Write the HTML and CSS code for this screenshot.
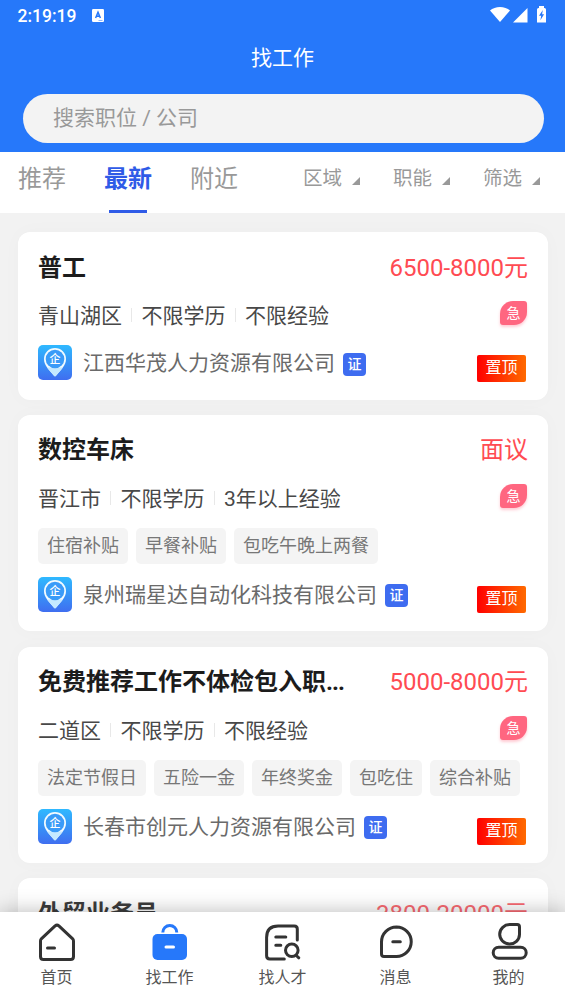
FILE: index.html
```html
<!DOCTYPE html>
<html lang="zh-CN">
<head>
<meta charset="utf-8">
<title>找工作</title>
<link rel="stylesheet" href="styles.css">
</head>
<body>
<svg class="defs" width="0" height="0">
  <defs>
    <linearGradient id="logo-bg" x1="0" y1="0" x2="0" y2="1"><stop offset="0" stop-color="#2fb9ff"/><stop offset="1" stop-color="#3f6ef0"/></linearGradient>
    <symbol id="logo" viewBox="0 0 34 35">
      <rect width="34" height="35" rx="5" fill="url(#logo-bg)"/>
      <path d="M17 3a11 11 0 0 0-11 11.200c0 6 5 10.500 10 16.500q1 1 2 0c5-6 10-10.500 10-16.500A11 11 0 0 0 17 3z" fill="#f2fbff"/>
      <path d="M9 22.500h16l-7 8.200q-1 1-2 0z" fill="#c5e9ff"/>
      <circle cx="17" cy="14" r="9.300" fill="#3a9bf8"/>
      <text x="17" y="18" text-anchor="middle" class="logo-char">企</text>
    </symbol>
  </defs>
</svg>
<div class="app">
  <header class="header">
    <div class="status">
      <span class="clock">2:19:19</span>
      <svg class="status-app" width="12" height="13" viewBox="0 0 12 13"><rect width="12" height="13" rx="1.200" fill="#fff"/><path d="M3.600 9 6 3.200 8.400 9M4.300 7.200h3.400" fill="none" stroke="#2678fa" stroke-width="1.500"/><path d="M6.500 11.500h4" stroke="#8fb9fd"/></svg>
      <svg class="status-right" width="57" height="18" viewBox="0 0 57 18"><path d="M0 4.500C5-.3 15-.3 20 4.500L10 16z" fill="#fff"/><path d="M23 16.500 37.500 2v14.500z" fill="#fff"/><path d="M47 3.500q0-1.500 1.500-1.500h.5V0h5v2h.5Q56 2 56 3.500v13h-9z" fill="#fff"/><path d="M52.800 4 49 9.700h2.200l-.8 4.500 3.700-6h-2z" fill="#2678fa"/></svg>
    </div>
    <h1 class="page-title">找工作</h1>
    <div class="search">搜索职位 / 公司</div>
  </header>
  <nav class="tabs">
    <span class="tab">推荐</span><span class="tab active">最新</span><span class="tab">附近</span>
    <div class="filters"><span class="filter">区域</span><span class="filter">职能</span><span class="filter">筛选</span></div>
  </nav>
  <main class="list">
    <article class="card">
      <div class="row"><h2 class="job">普工</h2><span class="pay">6500-8000元</span></div>
      <div class="row"><div class="meta"><span>青山湖区</span><span>不限学历</span><span>不限经验</span></div><span class="urgent">急</span></div>
      <div class="company"><svg class="logo"><use href="#logo"/></svg><span class="name">江西华茂人力资源有限公司</span><span class="cert">证</span><span class="top">置顶</span></div>
    </article>
    <article class="card">
      <div class="row"><h2 class="job">数控车床</h2><span class="pay">面议</span></div>
      <div class="row"><div class="meta"><span>晋江市</span><span>不限学历</span><span>3年以上经验</span></div><span class="urgent">急</span></div>
      <div class="tags"><span class="tag">住宿补贴</span><span class="tag">早餐补贴</span><span class="tag">包吃午晚上两餐</span></div>
      <div class="company"><svg class="logo"><use href="#logo"/></svg><span class="name">泉州瑞星达自动化科技有限公司</span><span class="cert">证</span><span class="top">置顶</span></div>
    </article>
    <article class="card">
      <div class="row"><h2 class="job">免费推荐工作不体检包入职<span class="dots">...</span></h2><span class="pay">5000-8000元</span></div>
      <div class="row"><div class="meta"><span>二道区</span><span>不限学历</span><span>不限经验</span></div><span class="urgent">急</span></div>
      <div class="tags"><span class="tag">法定节假日</span><span class="tag">五险一金</span><span class="tag">年终奖金</span><span class="tag">包吃住</span><span class="tag">综合补贴</span></div>
      <div class="company"><svg class="logo"><use href="#logo"/></svg><span class="name">长春市创元人力资源有限公司</span><span class="cert">证</span><span class="top">置顶</span></div>
    </article>
    <article class="card faded">
      <div class="row"><h2 class="job">外贸业务员</h2><span class="pay">3800-20000元</span></div>
    </article>
  </main>
  <footer class="tabbar">
    <a class="item"><svg class="icon" viewBox="0.5 0 40 40"><path d="M18.600 2.900 4.800 15.800Q4 16.600 4 17.900V33.500Q4 36.500 7 36.500h27Q37 36.500 37 33.500V17.900q0-1.300-.8-2.100L22.400 2.900Q20.500 1.300 18.600 2.900z"/><path d="M11 25h7"/></svg>首页</a>
    <a class="item"><svg class="icon" viewBox="0.5 0 40 40"><path d="M13.300 9.500a7 7 0 0 1 14 0" class="blue-line"/><rect x="3" y="11" width="34.500" height="26" rx="5" class="blue"/><path d="M16.500 24h7.500" class="white-line"/></svg>找工作</a>
    <a class="item"><svg class="icon" viewBox="0.7 0 40 40"><path d="M22 36H7.500Q4.300 36 4.300 32.800V14.500Q4.300 3 15.800 3H32Q35 3 35 6V17M13.500 14h10M13.500 22.300h5"/><circle cx="29.500" cy="27.300" r="6.300"/><path d="m34 32.500 2.500 2.300"/></svg>找人才</a>
    <a class="item"><svg class="icon" viewBox="0.5 0 40 40"><path d="M21 4A14.700 14.700 0 0 1 21 33.500H8.500Q6 33.500 6 31V19A15 15 0 0 1 21 4zM17.300 18.800h7.500"/></svg>消息</a>
    <a class="item"><svg class="icon" viewBox="0.5 0 40 40"><path d="M21.300 1.600H28.700Q31 1.600 31 3.900V11.500A9.900 9.700 0 1 1 21.300 1.600z"/><rect x="4.700" y="24.300" width="33" height="11" rx="5.500"/></svg>我的</a>
  </footer>
</div>
</body>
</html>
```

FILE: styles.css
```css
* { box-sizing: border-box; }
body {
  margin: 0;
  font-family: Roboto, "Noto Sans CJK SC", sans-serif;
  color: #1c1c1c;
  background: #f2f2f2;
}
h1, h2 { margin: 0; }
.defs { display: block; }
.app {
  display: flex;
  flex-direction: column;
  width: 565px;
  height: 1004px;
  overflow: hidden;
}
.header {
  flex: none;
  height: 152px;
  background: #2678fa;
  color: #fff;
}
.status {
  display: flex;
  align-items: center;
  height: 31px;
  padding: 0 18px 0 17.500px;
}
.clock { font-size: 17.500px; font-weight: 500; }
.status-app { margin: -1px 0 0 16px; }
.status-right { margin: -2px 0 0 auto; }
.page-title {
  height: 52px;
  font-size: 21px;
  line-height: 54px;
  font-weight: 400;
  text-align: center;
}
.search {
  height: 49.500px;
  margin: 10.500px 21px 0 22.500px;
  padding-left: 30.500px;
  border-radius: 25px;
  background: #f3f3f3;
  color: #999;
  font-size: 21px;
  line-height: 49px;
}
.tabs {
  flex: none;
  display: flex;
  height: 61px;
  padding: 0 25px 0 18px;
  background: #fff;
  color: #999;
}
.tab {
  display: flex;
  flex-direction: column;
  align-items: center;
  margin-right: 38px;
  font-size: 24px;
  line-height: 54px;
}
.tab.active { color: #2f5be7; font-weight: 700; }
.tab.active::after {
  content: "";
  width: 38px;
  height: 3px;
  margin-top: 4px;
  background: #2f5be7;
}
.filters { display: flex; gap: 33px; margin-left: auto; }
.filter { display: flex; align-items: center; height: 49px; font-size: 19.500px; }
.filter::after {
  content: "";
  width: 8px;
  height: 8px;
  margin: 9px 0 0 10px;
  background: #999;
  clip-path: polygon(100% 0, 100% 100%, 0 100%);
}
.list {
  flex: 1;
  min-height: 0;
  overflow: hidden;
  padding: 19px 17px 0 18px;
}
.card {
  padding: 11px 20px 19.500px;
  margin-bottom: 15.300px;
  border-radius: 12px;
  background: #fff;
  box-shadow: 0 0 20px rgba(0, 0, 0, .025);
}
.row {
  display: flex;
  align-items: center;
  justify-content: space-between;
  height: 48px;
}
.job { font-size: 24px; line-height: 48px; font-weight: 700; padding-top: 1px; }
.dots { letter-spacing: -1px; }
.pay { font-size: 24px; line-height: 48px; color: #ff4b52; padding-top: 1px; }
.faded .job { color: #3c3c3c; }
.faded .pay { color: #f96a72; }
.meta { display: flex; align-items: center; margin-top: -2px; font-size: 21px; color: #484848; }
.meta span + span::before {
  content: "";
  display: inline-block;
  width: 1px;
  height: 14px;
  margin: 0 9.500px 0 9px;
  vertical-align: 1px;
  background: #e8e8e8;
}
.urgent {
  width: 27px;
  height: 24px;
  margin: -4px 1px 0 0;
  border-radius: 13px 3px 13px 3px;
  background: #ff6680;
  box-shadow: 0 2px 3px rgba(255, 102, 128, .35);
  color: #fff;
  font-size: 14px;
  line-height: 24px;
  text-align: center;
}
.tags { display: flex; gap: 8px; margin: 6px 0 13px; }
.tag {
  height: 36px;
  padding: 0 9px;
  border-radius: 5px;
  background: #f4f4f4;
  color: #777;
  font-size: 18px;
  line-height: 36px;
}
.company { display: flex; align-items: center; height: 35px; margin-top: 6px; }
.logo { flex: none; width: 34px; height: 35px; }
.logo-char { font-size: 11px; font-weight: 500; fill: #fff; }
.name { margin: 1px 8px 0 11px; font-size: 21px; line-height: 34px; color: #6a6a6a; }
.cert {
  width: 23px;
  height: 23px;
  margin-top: 3px;
  border-radius: 4px;
  background: #3e6cf0;
  color: #fff;
  font-size: 14px;
  line-height: 23px;
  font-weight: 500;
  text-align: center;
}
.top {
  width: 49px;
  height: 27px;
  margin: 11px 2px 0 auto;
  border-radius: 2px;
  background: linear-gradient(90deg, #f00, #ff6a00);
  color: #fff;
  font-size: 16px;
  line-height: 26px;
  text-align: center;
}
.tabbar {
  position: relative;
  flex: none;
  display: flex;
  height: 92px;
  background: #fff;
  box-shadow: 0 0 20px rgba(0, 0, 0, .28);
}
.item {
  flex: 1;
  display: flex;
  flex-direction: column;
  align-items: center;
  padding-top: 11px;
  font-size: 16px;
  line-height: 30px;
  color: #555;
}
.icon {
  width: 40px;
  height: 40px;
  fill: none;
  stroke: #333;
  stroke-width: 3;
  stroke-linecap: round;
  stroke-linejoin: round;
}
.blue-line { stroke: #2678fa; stroke-linecap: butt; }
.blue { fill: #2678fa; stroke: none; }
.white-line { stroke: #fff; }
```
